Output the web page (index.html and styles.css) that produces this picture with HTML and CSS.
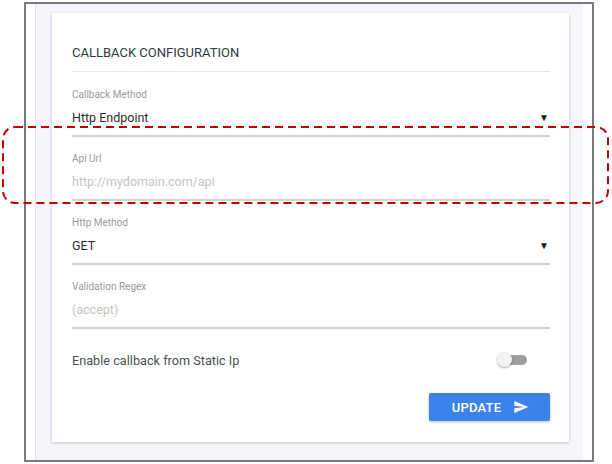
FILE: index.html
```html
<!DOCTYPE html>
<html>
<head>
<meta charset="utf-8">
<link rel="stylesheet" href="styles.css">
</head>
<body>
<div class="frame">
  <div class="gutter"></div>
  <div class="panel">
    <div class="card">
      <div class="card-header">CALLBACK CONFIGURATION</div>
      <div class="field first">
        <div class="label">Callback Method</div>
        <div class="input select"><span>Http Endpoint</span><span class="caret">▼</span></div>
      </div>
      <div class="field">
        <div class="label">Api Url</div>
        <div class="input placeholder"><span>http://mydomain.com/api</span></div>
      </div>
      <div class="field">
        <div class="label">Http Method</div>
        <div class="input select"><span>GET</span><span class="caret">▼</span></div>
      </div>
      <div class="field">
        <div class="label">Validation Regex</div>
        <div class="input placeholder"><span>(accept)</span></div>
      </div>
      <div class="toggle-row">
        <span>Enable callback from Static Ip</span>
        <span class="switch"><span class="track"></span><span class="knob"></span></span>
      </div>
      <div class="actions">
        <button class="btn">UPDATE
          <svg class="send" viewBox="0 0 24 24" width="16" height="16"><path d="M2.01 21L23 12 2.01 3 2 10l15 2-15 2z" fill="#fff"/></svg>
        </button>
      </div>
    </div>
  </div>
  <div class="gutter"></div>
</div>
<svg class="annot" width="610" height="80" viewBox="0 0 610 80"><rect x="3" y="1" width="605" height="76" rx="12" ry="12" fill="none" stroke="#c00000" stroke-width="2" stroke-dasharray="8 5"/></svg>
</body>
</html>
```
FILE: styles.css
```css
html, body { margin: 0; padding: 0; background: #fff; }
body { font-family: Roboto, "Noto Sans", Arial, sans-serif; width: 612px; height: 464px; position: relative; overflow: hidden; }
.frame {
  margin: 2px 0 0 24px;
  width: 566px;
  height: 456px;
  border: 2px solid #7a7a7a;
  display: flex;
}
.gutter { width: 9px; flex: none; background: #fff; }
.panel {
  flex: 1;
  background: #f5f6fb;
  border-left: 1px solid #e3e4ea;
  padding: 9px 14px 0 16px;
}
.card {
  background: #fff;
  height: 429px;
  box-sizing: border-box;
  padding: 0 19px 0 20px;
  box-shadow: 0 1px 3px rgba(0,0,0,0.22);
}
.card-header {
  padding-top: 32px;
  line-height: 16px;
  height: 26px;
  font-size: 13px;
  color: #2f3a44;
  border-bottom: 1px solid #e6e6e6;
}
.field { padding-top: 16px; }
.field.first { padding-top: 17px; }
.label { font-size: 10px; line-height: 12px; color: #9a9a9a; }
.input {
  height: 34px;
  line-height: 34px;
  font-size: 12.5px;
  border-bottom: 2px solid #d4d4d4;
  display: flex;
  justify-content: space-between;
  color: #2b2b2b;
}
.input.placeholder { color: #c4c4c4; }
.caret { font-size: 10px; color: #111; padding-right: 1px; }
.toggle-row {
  margin-top: 21px;
  height: 20px;
  display: flex;
  justify-content: space-between;
  align-items: center;
  font-size: 12.7px;
  color: #4a4f55;
}
.switch { position: relative; width: 30px; height: 16px; margin-right: 23px; }
.track { position: absolute; left: 8px; top: 3px; width: 22px; height: 10px; border-radius: 5px; background: #9e9e9e; }
.knob { position: absolute; left: 0; top: 0; width: 15px; height: 15px; border-radius: 50%; background: #f3f3f3; box-shadow: 0 1px 2px rgba(0,0,0,0.35); }
.actions { display: flex; justify-content: flex-end; margin-top: 23px; }
.btn {
  width: 121px;
  height: 28px;
  border: none;
  border-radius: 2px;
  background: #3b82e9;
  color: #fff;
  font-family: inherit;
  font-size: 13px;
  font-weight: 500;
  letter-spacing: 0.2px;
  display: flex;
  align-items: center;
  justify-content: center;
  gap: 12px;
  padding: 0 0 0 2px;
  box-shadow: 0 1px 3px rgba(0,0,0,0.25);
}
.send { display: block; }
.annot { position: absolute; left: 0; top: 126px; }
```
